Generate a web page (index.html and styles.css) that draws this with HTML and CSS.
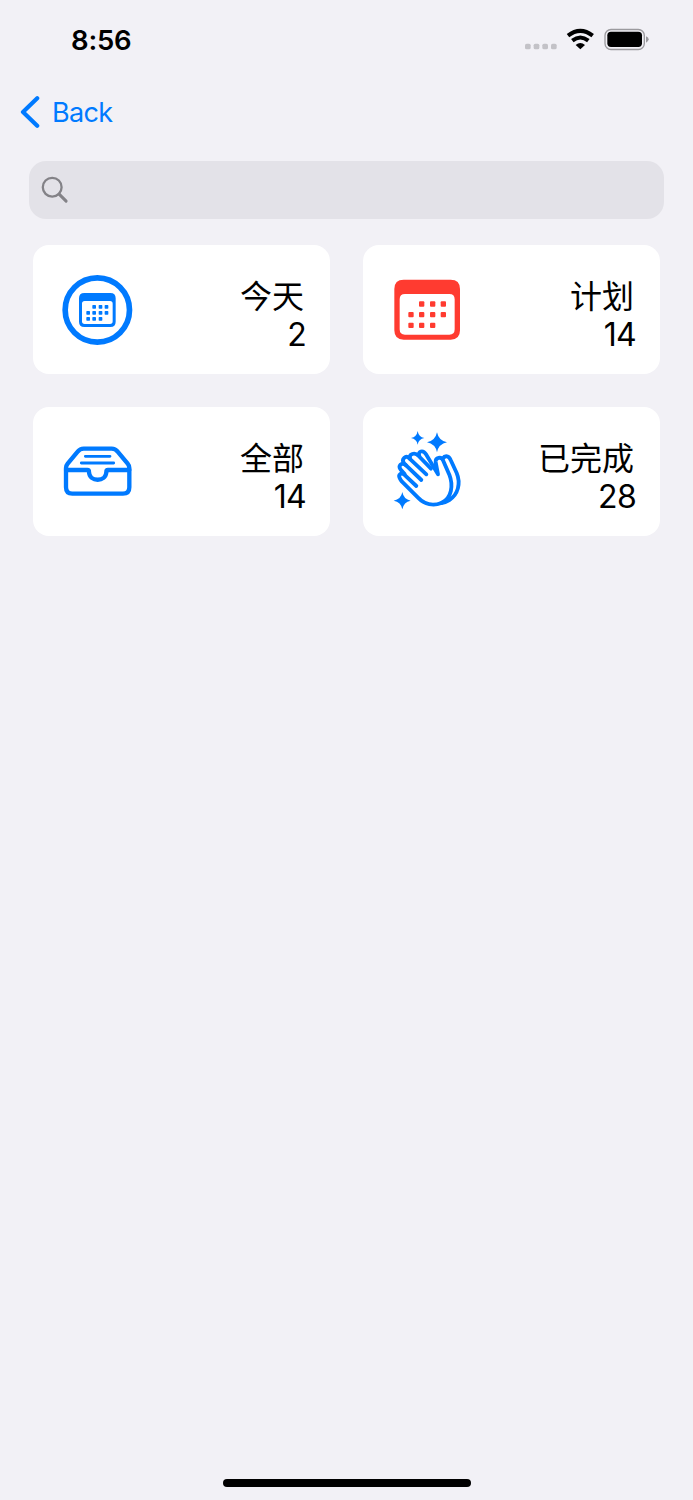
FILE: index.html
```html
<!DOCTYPE html>
<html lang="zh-CN">
<head>
<meta charset="utf-8">
<title>Reminders</title>
<link rel="stylesheet" href="styles.css">
</head>
<body>
<div class="screen">
  <header class="status">
    <span class="clock">8:56</span>
    <svg class="indicators" viewBox="0 0 435 120" aria-hidden="true">
      <g fill="#c3c2c7"><rect x="30" y="71" width="17" height="17" rx="5"/><rect x="56" y="71" width="17" height="17" rx="5"/><rect x="82" y="71" width="17" height="17" rx="5"/><rect x="108" y="71" width="17" height="17" rx="5"/></g>
      <g fill="none" stroke="#000" stroke-width="12"><path d="M159 47Q196 18 233 47"/><path d="M172 62Q196 43 220 62"/></g>
      <path d="M182 75Q196 63 210 75L196 88Z"/>
      <rect x="270" y="28.500" width="118" height="60" rx="18" fill="none" stroke="#9b9a9e" stroke-width="4"/>
      <rect x="277" y="35" width="104" height="46" rx="11"/>
      <path d="M393 49Q401 52 401 58T393 68Z" fill="#9b9a9e"/>
    </svg>
  </header>
  <nav class="nav">
    <svg class="chevron" viewBox="0 0 20 32" aria-hidden="true"><path d="M17.200 2.300 3 16 17.200 29.700" /></svg>
    <span class="back">Back</span>
  </nav>
  <div class="search">
    <svg class="glass" viewBox="0 0 28 28" aria-hidden="true"><circle cx="11.200" cy="11.200" r="9.400"/><path d="m18.100 18.100 7 7"/></svg>
  </div>
  <main class="grid">
    <section class="card">
      <svg class="icon" viewBox="0 0 270 270" aria-hidden="true">
        <circle cx="136" cy="135" r="96.500" fill="none" stroke="#007aff" stroke-width="17"/>
        <path fill="#007aff" fill-rule="evenodd" d="M97 84H175Q191 84 191 100V170Q191 186 175 186H97Q81 186 81 170V100Q81 84 97 84ZM98 108Q90 108 90 116V169Q90 177 98 177H174Q182 177 182 169V116Q182 108 174 108Z"/>
        <g fill="#007aff"><rect x="121" y="120" width="11" height="11" rx="2"/><rect x="140" y="120" width="11" height="11" rx="2"/><rect x="158" y="120" width="11" height="11" rx="2"/><rect x="103" y="138" width="11" height="11" rx="2"/><rect x="121" y="138" width="11" height="11" rx="2"/><rect x="140" y="138" width="11" height="11" rx="2"/><rect x="158" y="138" width="11" height="11" rx="2"/><rect x="103" y="156" width="11" height="11" rx="2"/><rect x="121" y="156" width="11" height="11" rx="2"/><rect x="140" y="156" width="11" height="11" rx="2"/></g>
      </svg>
      <div class="info"><span class="label">今天</span><span class="count">2</span></div>
    </section>
    <section class="card">
      <svg class="icon" viewBox="0 0 270 270" aria-hidden="true">
        <path fill="#ff3b30" fill-rule="evenodd" d="M65 44H206Q234 44 234 72V196Q234 224 206 224H65Q37 224 37 196V72Q37 44 65 44ZM69 87Q53 87 53 103V193Q53 209 69 209H202Q218 209 218 193V103Q218 87 202 87Z"/>
        <g fill="#ff3b30"><rect x="111" y="109" width="16" height="16" rx="3"/><rect x="144" y="109" width="16" height="16" rx="3"/><rect x="176" y="109" width="16" height="16" rx="3"/><rect x="79" y="141" width="16" height="16" rx="3"/><rect x="111" y="141" width="16" height="16" rx="3"/><rect x="144" y="141" width="16" height="16" rx="3"/><rect x="176" y="141" width="16" height="16" rx="3"/><rect x="79" y="173" width="16" height="16" rx="3"/><rect x="111" y="173" width="16" height="16" rx="3"/><rect x="144" y="173" width="16" height="16" rx="3"/></g>
      </svg>
      <div class="info"><span class="label">计划</span><span class="count">14</span></div>
    </section>
    <section class="card">
      <svg class="icon" viewBox="0 -9 270 270" aria-hidden="true">
        <g fill="none" stroke="#007aff" stroke-width="13" stroke-linecap="round" stroke-linejoin="round">
          <path d="M42 120H106Q111 120 111 126C112 157 162 157 163 126Q163 120 168 120H232"/>
          <path d="M42 114Q42 107 47 101L77 65Q84 56 95 56H179Q190 56 197 65L227 101Q232 107 232 114V172Q232 191 213 191H61Q42 191 42 172Z"/>
          <path stroke-width="8.500" d="M100 79H174M88 99H185"/>
        </g>
      </svg>
      <div class="info"><span class="label">全部</span><span class="count">14</span></div>
    </section>
    <section class="card">
      <svg class="icon" viewBox="-9 15 270 270" aria-hidden="true">
        <g fill="#007aff">
          <path d="M98 27Q101 45 118 48Q101 51 98 68Q95 51 78 48Q95 45 98 27Z"/>
          <path d="M156 31Q161 56 186 61Q161 66 156 91Q151 66 126 61Q151 56 156 31Z"/>
          <path d="M52 210Q56 232 77 236Q56 240 52 262Q48 240 26 236Q48 232 52 210Z"/>
        </g>
        <g transform="translate(21 60)" fill="none" stroke="#007aff" stroke-width="11.500" stroke-linecap="round" stroke-linejoin="round">
          <path d="M73 132 36 97C27 91 18 99 23 108Q25 113 30 119L78 167C98 188 125 192 148 183C180 169 184 129 172 98L153 55C148 43 130 46 131 60L138 97 102 37C93 22 76 28 82 41"/>
          <path d="M88 114 40 68C29 60 17 71 26 83L38 96"/>
          <path d="M103 97 52 49C41 38 27 51 36 64L42 70"/>
          <path d="M117 80 80 42C68 29 50 36 54 50"/>
          <path d="M152 50C160 38 171 42 176 54L194 93C207 124 198 158 172 174Q161 181 148 183"/>
        </g>
      </svg>
      <div class="info"><span class="label">已完成</span><span class="count">28</span></div>
    </section>
  </main>
  <div class="home"></div>
</div>
</body>
</html>
```
FILE: styles.css
```css
* { box-sizing: border-box; }
body { margin: 0; background: #f2f1f6; color: #000; font-family: Inter, "Noto Sans CJK SC", sans-serif; }
.screen { height: 1500px; display: flex; flex-direction: column; }
.status { height: 80px; padding: 20px 33px 0 71px; display: flex; justify-content: space-between; align-items: flex-start; }
.clock { font-size: 27.500px; line-height: 40px; font-weight: 600; letter-spacing: -.2px; }
.indicators { width: 145px; height: 40px; }
.nav { height: 64px; padding-left: 20px; display: flex; align-items: center; gap: 12px; color: #007aff; }
.chevron { width: 20px; height: 32px; fill: none; stroke: currentColor; stroke-width: 4.200; stroke-linecap: round; stroke-linejoin: round; }
.back { font-size: 27px; line-height: 32px; letter-spacing: -.7px; padding-top: 1px; }
.search { margin: 17px 29px 0; height: 57.500px; border-radius: 17px; background: #e3e2e8; padding-left: 12px; display: flex; align-items: center; }
.glass { width: 28px; height: 28px; fill: none; stroke: #838287; stroke-width: 2.300; stroke-linecap: round; }
.glass path { stroke-width: 3; }
.grid { margin: 26.500px 33px 0; display: grid; grid-template-columns: 297px 297px; grid-auto-rows: 129px; gap: 33px; }
.card { background: #fff; border-radius: 16px; padding: 20px 24px 0 19px; display: flex; justify-content: space-between; align-items: flex-start; }
.icon { width: 90px; height: 90px; }
.info { display: flex; flex-direction: column; align-items: flex-end; padding-top: 10px; }
.label { font-family: "Noto Sans CJK SC", sans-serif; font-weight: 400; font-size: 32px; line-height: 38px; margin-right: 2px; }
.count { font-size: 32px; line-height: 38px; letter-spacing: -.7px; margin-top: 3px; }
.home { width: 248px; height: 8px; border-radius: 4px; background: #000; margin: auto auto 13px; }
```
